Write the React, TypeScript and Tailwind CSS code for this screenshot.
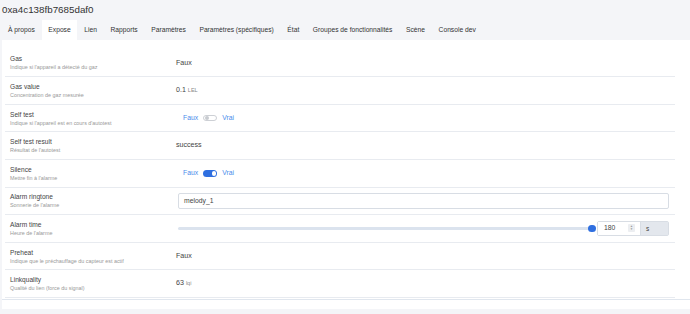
import type { ReactNode } from "react";

type Row = {
  label: string;
  desc: string;
  value: ReactNode;
};

const tabs = [
  "À propos",
  "Expose",
  "Lien",
  "Rapports",
  "Paramètres",
  "Paramètres (spécifiques)",
  "État",
  "Groupes de fonctionnalités",
  "Scène",
  "Console dev",
];

function Toggle({ on }: { on: boolean }) {
  return (
    <div className="flex items-center pl-[7px] text-[6.8px] text-[#4a8ceb]">
      <span>Faux</span>
      <span
        className={
          on
            ? "mx-[5px] flex h-[6.5px] w-[14px] items-center justify-end rounded-full bg-[#2f6fe0] px-[1px]"
            : "mx-[5px] flex h-[6.5px] w-[14px] items-center justify-start rounded-full border border-[#cdd0d5] bg-white px-[1px]"
        }
      >
        <span
          className={
            on
              ? "h-[4.5px] w-[4.5px] rounded-full bg-white"
              : "h-[3.5px] w-[3.5px] rounded-full bg-[#c8cbd0]"
          }
        />
      </span>
      <span>Vrai</span>
    </div>
  );
}

function Slider() {
  return (
    <div className="ml-[2px] flex items-center">
      <div className="relative flex h-[8px] flex-1 items-center">
        <div className="h-[3px] w-full rounded-full bg-[#dbe3ee]" />
        <div className="absolute right-[-3.5px] h-[7.5px] w-[7.5px] rounded-full bg-[#2f6fe0]" />
      </div>
      <div className="ml-[5px] flex h-[15px] w-[72px] rounded-[2px] border border-[#d8dde4]">
        <div className="flex flex-1 items-center justify-between bg-white pl-[6px] pr-[5px] text-[6.8px] text-[#444]">
          <span>180</span>
          <span className="flex h-[8px] w-[7px] flex-col items-center justify-center rounded-[1px] bg-[#eceef1] text-[3px] leading-[3.5px] text-[#999]">
            <span>▲</span>
            <span>▼</span>
          </span>
        </div>
        <div className="flex w-[28px] items-center border-l border-[#d8dde4] bg-[#e3e7ed] pl-[5px] text-[6.5px] text-[#444]">
          s
        </div>
      </div>
    </div>
  );
}

const rows: Row[] = [
  { label: "Gas", desc: "Indique si l'appareil a détecté du gaz", value: "Faux" },
  {
    label: "Gas value",
    desc: "Concentration de gaz mesurée",
    value: (
      <span>
        0.1 <span className="text-[5.5px] text-[#888]">LEL</span>
      </span>
    ),
  },
  { label: "Self test", desc: "Indique si l'appareil est en cours d'autotest", value: <Toggle on={false} /> },
  { label: "Self test result", desc: "Résultat de l'autotest", value: "success" },
  { label: "Silence", desc: "Mettre fin à l'alarme", value: <Toggle on /> },
  {
    label: "Alarm ringtone",
    desc: "Sonnerie de l'alarme",
    value: (
      <div className="ml-[2px] flex h-[16px] items-center rounded-[2px] border border-[#d8dde4] bg-white pl-[5px] text-[6.8px] text-[#444]">
        melody_1
      </div>
    ),
  },
  { label: "Alarm time", desc: "Heure de l'alarme", value: <Slider /> },
  { label: "Preheat", desc: "Indique que le préchauffage du capteur est actif", value: "Faux" },
  {
    label: "Linkquality",
    desc: "Qualité du lien (force du signal)",
    value: (
      <span>
        63 <span className="text-[5.5px] text-[#888]">lqi</span>
      </span>
    ),
  },
];

export default function App() {
  return (
    <div
      className="h-[314px] w-[690px] overflow-hidden bg-[#f4f5f8] text-[#444]"
      style={{ fontFamily: '"Liberation Sans", Arial, sans-serif' }}
    >
      {/* Device title */}
      <div className="flex h-[20px] items-center pl-[2px] text-[9.8px] text-[#333]">
        0xa4c138fb7685daf0
      </div>

      {/* Tabs */}
      <div className="flex h-[20px] pl-[1.2px] text-[6.7px] text-[#333]">
        {tabs.map((t) => (
          <div
            key={t}
            className={
              t === "Expose"
                ? "flex items-center bg-white px-[6.8px]"
                : "flex items-center px-[6.8px]"
            }
          >
            {t}
          </div>
        ))}
      </div>

      {/* Card */}
      <div className="ml-[2px] bg-white pb-[9px] pt-[9.6px]">
        <div className="border-b border-[#e0e6ee] pb-[1px]">
          <div className="pl-[3px] pr-[15px]">
            {rows.map((r) => (
              <div
                key={r.label}
                className="box-border flex h-[27.6px] items-center border-b border-[#e8ebf0]"
              >
                <div className="w-[171px] shrink-0 pl-[5px] pt-[1px]">
                  <div className="text-[6.6px] leading-[9px] text-[#444]">{r.label}</div>
                  <div className="text-[5.4px] leading-[9px] text-[#999]">{r.desc}</div>
                </div>
                <div className="flex-1 pr-[6px] text-[7.1px] text-[#444]">{r.value}</div>
              </div>
            ))}
          </div>
        </div>
      </div>
    </div>
  );
}
